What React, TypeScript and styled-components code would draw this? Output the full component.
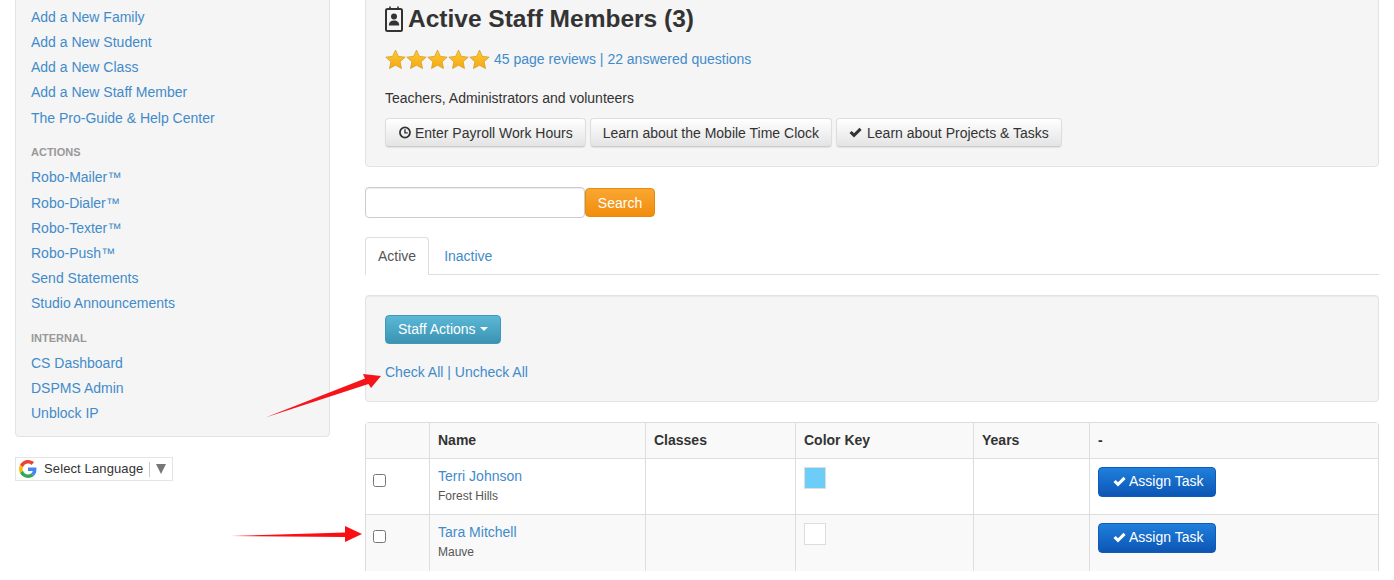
import React from "react";
import styled, { createGlobalStyle } from "styled-components";

const Global = createGlobalStyle`
  html, body { margin: 0; padding: 0; background: #fff; height: 580px; overflow: hidden; }
  body { font-family: "Liberation Sans", Arial, sans-serif; font-size: 14px; line-height: 20px; color: #333; }
  * { box-sizing: border-box; }
`;

const Page = styled.div`
  position: relative;
  display: grid;
  grid-template-columns: 315px 1014px;
  column-gap: 35px;
  padding: 0 15px;
  margin-top: -20px;
  height: 600px;
  overflow: hidden;
`;

const Side = styled.aside`
  display: flex;
  flex-direction: column;
  gap: 20px;
  align-items: flex-start;
`;

const SidePanel = styled.nav`
  width: 100%;
  height: 457px;
  padding: 23.8px 15px 0;
  background: #f5f5f5;
  border: 1px solid #e3e3e3;
  border-radius: 4px;
  box-shadow: inset 0 1px 1px rgba(0, 0, 0, 0.05);
`;

const SideList = styled.div`
  display: flex;
  flex-direction: column;
`;

const SideLink = styled.a`
  color: #428bca;
  line-height: 25.2px;
  font-size: 14px;
  height: 25.2px;
`;

const SideHead = styled.div`
  font-size: 11px;
  font-weight: bold;
  color: #999;
  line-height: 20px;
  margin: 11.6px 0 3px;
`;

const LangBox = styled.div`
  width: 158px;
  height: 24px;
  display: flex;
  align-items: center;
  padding-left: 3px;
  background: #fff;
  border: 1px solid #e4e4e4;
  font-size: 13px;
  color: #333;
`;

const LangText = styled.span`
  margin-left: 7px;
  letter-spacing: 0.12px;
`;

const LangSep = styled.span`
  width: 1px;
  height: 15px;
  margin: 0 6px;
  background: #ccc;
`;

const LangCaret = styled.span`
  width: 0;
  height: 0;
  border-left: 5px solid transparent;
  border-right: 5px solid transparent;
  border-top: 10px solid #777;
`;

const Main = styled.main`
  display: flex;
  flex-direction: column;
`;

const Hero = styled.section`
  height: 187px;
  padding: 20px 19px 0;
  background: #f5f5f5;
  border: 1px solid #e3e3e3;
  border-radius: 4px;
  box-shadow: inset 0 1px 1px rgba(0, 0, 0, 0.05);
`;

const Title = styled.h3`
  display: flex;
  align-items: center;
  gap: 5px;
  margin: 0;
  height: 36px;
  font-size: 24.5px;
  line-height: 36px;
  font-weight: bold;
  color: #333;
`;

const Rating = styled.div`
  display: flex;
  align-items: center;
  gap: 4px;
  margin-top: 8px;
  height: 28px;
  color: #428bca;
`;

const Stars = styled.span`
  display: flex;
  gap: 0;
`;

const Link = styled.a`
  color: #428bca;
`;

const Lead = styled.p`
  margin: 14px 0 0;
  line-height: 22px;
  color: #333;
`;

const ButtonRow = styled.div`
  display: flex;
  gap: 4px;
  margin-top: 9px;
`;

const GrayButton = styled.button`
  display: inline-flex;
  align-items: center;
  justify-content: center;
  gap: 5px;
  height: 29px;
  padding: 0 12px;
  font: inherit;
  color: #333;
  white-space: nowrap;
  background: linear-gradient(to bottom, #fff 0%, #e4e4e4 100%);
  border: 1px solid #ddd;
  border-bottom-color: #ccc;
  border-radius: 4px;
  box-shadow: 0 1px 1px rgba(0, 0, 0, 0.08);
`;

const SearchRow = styled.form`
  display: flex;
  align-items: center;
  margin-top: 20px;
  height: 31px;
`;

const SearchInput = styled.input`
  width: 220px;
  height: 31px;
  padding: 0 10px;
  border: 1px solid #ccc;
  border-radius: 4px;
  background: #fff;
  box-shadow: inset 0 1px 1px rgba(0, 0, 0, 0.075);
`;

const SearchButton = styled.button`
  width: 70px;
  height: 29px;
  font: inherit;
  color: #fff;
  background: linear-gradient(to bottom, #f9a733 0%, #f28c0b 100%);
  border: 1px solid #e8890c;
  border-radius: 4px;
`;

const Tabs = styled.div`
  display: flex;
  height: 38px;
  margin-top: 19px;
  border-bottom: 1px solid #ddd;
`;

const Tab = styled.a<{ $active?: boolean }>`
  height: 38px;
  padding: 8px 12px 0;
  line-height: 20px;
  border: 1px solid ${(p) => (p.$active ? "#ddd" : "transparent")};
  border-bottom: ${(p) => (p.$active ? "1px solid #fff" : "none")};
  border-radius: 4px 4px 0 0;
  background: ${(p) => (p.$active ? "#fff" : "transparent")};
  color: ${(p) => (p.$active ? "#555" : "#428bca")};
  margin-right: 2px;
`;

const Well = styled.section`
  height: 107px;
  margin-top: 20px;
  padding: 19px 19px 0;
  background: #f5f5f5;
  border: 1px solid #e3e3e3;
  border-radius: 4px;
  box-shadow: inset 0 1px 1px rgba(0, 0, 0, 0.05);
`;

const InfoButton = styled.button`
  display: flex;
  align-items: center;
  gap: 4px;
  width: 116px;
  height: 29px;
  padding: 0 0 2px 12px;
  font: inherit;
  color: #fff;
  background: linear-gradient(to bottom, #5bb8d6 0%, #3b93b2 100%);
  border: 1px solid #3f98b8;
  border-radius: 4px;
`;

const Caret = styled.span`
  width: 0;
  height: 0;
  border-left: 4px solid transparent;
  border-right: 4px solid transparent;
  border-top: 4px solid #fff;
`;

const CheckLinks = styled.div`
  margin-top: 18px;
  color: #428bca;
`;

const Table = styled.table`
  width: 1014px;
  margin-top: 20px;
  border-collapse: separate;
  border-spacing: 0;
  table-layout: fixed;
  border: 1px solid #ddd;
  border-bottom: none;
  border-radius: 4px 4px 0 0;
`;

const Th = styled.th`
  height: 36px;
  padding: 0 8px 2px;
  text-align: left;
  font-weight: bold;
  background: #f9f9f9;
  border-bottom: 1px solid #ddd;
  & + & { border-left: 1px solid #ddd; }
`;

const Row = styled.tr<{ $odd?: boolean }>`
  background: ${(p) => (p.$odd ? "#f9f9f9" : "#fff")};
`;

const Td = styled.td<{ $last?: boolean }>`
  height: 56px;
  padding: 7px 8px 8px;
  vertical-align: top;
  border-bottom: ${(p) => (p.$last ? "none" : "1px solid #ddd")};
  & + & { border-left: 1px solid #ddd; }
`;

const CheckCell = styled(Td)`
  padding: 13px 0 0 7px;
`;

const Check = styled.input`
  display: block;
  width: 13px;
  height: 13px;
  margin: 1.500px 0 0;
`;

const Name = styled.a`
  display: block;
  color: #428bca;
  line-height: 20px;
`;

const Sub = styled.div`
  font-size: 12px;
  line-height: 20px;
  color: #555;
  margin-top: 0;
`;

const Swatch = styled.div<{ $color: string }>`
  width: 22px;
  height: 22px;
  margin-top: 1px;
  background: ${(p) => p.$color};
  border: 1px solid #ddd;
`;

const TaskButton = styled.button`
  display: inline-flex;
  align-items: center;
  gap: 3px;
  width: 118px;
  height: 30px;
  margin-top: 1px;
  padding: 0 0 2px 14px;
  font: inherit;
  color: #fff;
  background: linear-gradient(to bottom, #1f7fdb 0%, #0d55b5 100%);
  border: 1px solid #0f5bb9;
  border-radius: 4px;
`;

const Overlay = styled.svg`
  position: absolute;
  left: 0;
  top: 20px;
  pointer-events: none;
`;

const ClockSvg = styled.svg`
  margin-right: -1px;
`;

const GlyphCheck = ({ color, size = 13 }: { color: string; size?: number }) => (
  <svg width={size} height={size} viewBox="0 0 14 14" aria-hidden>
    <path d="M0.5 7.6 L2.9 5.3 L5.4 7.8 L11.3 2 L13.6 4.3 L5.4 12.4 Z" fill={color} />
  </svg>
);

const ClockIcon = () => (
  <ClockSvg width="13" height="13" viewBox="0 0 14 14" aria-hidden>
    <circle cx="7.500" cy="7" r="5.400" fill="none" stroke="#333" strokeWidth="1.9" />
    <path d="M7.500 3.600V7.400H10.500" fill="none" stroke="#333" strokeWidth="1.5" />
  </ClockSvg>
);

const BadgeIcon = () => (
  <svg width="18" height="26" viewBox="0 0 18 26" aria-hidden>
    <rect x="1" y="3" width="16" height="22" rx="1.5" fill="none" stroke="#333" strokeWidth="2" />
    <path d="M5 0.5V4M13 0.5V4" stroke="#333" strokeWidth="1.6" />
    <circle cx="9" cy="10.6" r="3" fill="#333" />
    <path d="M3.8 19.5c0-3.4 2-5 5.2-5s5.2 1.6 5.2 5z" fill="#333" />
  </svg>
);

const Star = () => (
  <svg width="21" height="21" viewBox="0 0 24 24" aria-hidden>
    <defs>
      <linearGradient id="starfill" x1="0" y1="0" x2="0" y2="1">
        <stop offset="0" stopColor="#fdc93a" />
        <stop offset="1" stopColor="#f6a80f" />
      </linearGradient>
    </defs>
    <path
      d="M12 1.2l3.3 7.2 7.8.9-5.8 5.3 1.6 7.8L12 18.5l-6.9 3.9 1.6-7.8L.9 9.3l7.8-.9z"
      fill="url(#starfill)"
      stroke="#d39a1e"
      strokeWidth="0.8"
    />
  </svg>
);

const GoogleG = () => (
  <svg width="18" height="18" viewBox="0 0 48 48" aria-hidden>
    <path fill="#EA4335" d="M24 9.5c3.5 0 6.7 1.2 9.2 3.6l6.9-6.9C35.9 2.4 30.5 0 24 0 14.6 0 6.5 5.4 2.6 13.2l8 6.2C12.5 13.7 17.800 9.500 24 9.500z" />
    <path fill="#4285F4" d="M46.500 24.500c0-1.600-.1-3.100-.4-4.500H24v9h12.700c-.6 2.900-2.200 5.400-4.700 7.100l7.700 6c4.500-4.200 6.800-10.300 6.800-17.600z" />
    <path fill="#FBBC05" d="M10.500 28.600c-.5-1.400-.8-3-.8-4.600s.3-3.200.8-4.600l-8-6.200C.9 16.500 0 20.100 0 24s.9 7.500 2.600 10.800l7.900-6.200z" />
    <path fill="#34A853" d="M24 48c6.500 0 11.900-2.100 15.900-5.800l-7.700-6c-2.200 1.500-4.900 2.300-8.200 2.300-6.200 0-11.500-4.200-13.400-9.900l-8 6.200C6.500 42.600 14.600 48 24 48z" />
  </svg>
);

const sections = [
  { links: ["Add a New Family", "Add a New Student", "Add a New Class", "Add a New Staff Member", "The Pro-Guide & Help Center"] },
  { head: "ACTIONS", links: ["Robo-Mailer™", "Robo-Dialer™", "Robo-Texter™", "Robo-Push™", "Send Statements", "Studio Announcements"] },
  { head: "INTERNAL", links: ["CS Dashboard", "DSPMS Admin", "Unblock IP"] },
];

const staff = [
  { name: "Terri Johnson", place: "Forest Hills", color: "#6ccdf8" },
  { name: "Tara Mitchell", place: "Mauve", color: "#ffffff" },
];

export default function App() {
  return (
    <Page>
      <Global />
      <Side>
        <SidePanel>
          {sections.map((s, i) => (
            <SideList key={i}>
              {s.head && <SideHead>{s.head}</SideHead>}
              {s.links.map((l) => (
                <SideLink key={l}>{l}</SideLink>
              ))}
            </SideList>
          ))}
        </SidePanel>
        <LangBox>
          <GoogleG />
          <LangText>Select Language</LangText>
          <LangSep />
          <LangCaret />
        </LangBox>
      </Side>
      <Main>
        <Hero>
          <Title>
            <BadgeIcon />
            Active Staff Members (3)
          </Title>
          <Rating>
            <Stars>
              {[0, 1, 2, 3, 4].map((i) => (
                <Star key={i} />
              ))}
            </Stars>
            <span>
              <Link>45 page reviews</Link> | <Link>22 answered questions</Link>
            </span>
          </Rating>
          <Lead>Teachers, Administrators and volunteers</Lead>
          <ButtonRow>
            <GrayButton>
              <ClockIcon />
              Enter Payroll Work Hours
            </GrayButton>
            <GrayButton>Learn about the Mobile Time Clock</GrayButton>
            <GrayButton>
              <GlyphCheck color="#333" />
              Learn about Projects &amp; Tasks
            </GrayButton>
          </ButtonRow>
        </Hero>
        <SearchRow>
          <SearchInput />
          <SearchButton type="button">Search</SearchButton>
        </SearchRow>
        <Tabs>
          <Tab $active>Active</Tab>
          <Tab>Inactive</Tab>
        </Tabs>
        <Well>
          <InfoButton>
            Staff Actions
            <Caret />
          </InfoButton>
          <CheckLinks>
            <Link>Check All</Link> | <Link>Uncheck All</Link>
          </CheckLinks>
        </Well>
        <Table>
          <colgroup>
            <col style={{ width: 63 }} />
            <col style={{ width: 216 }} />
            <col style={{ width: 150 }} />
            <col style={{ width: 178 }} />
            <col style={{ width: 116 }} />
            <col />
          </colgroup>
          <thead>
            <tr>
              <Th />
              <Th>Name</Th>
              <Th>Classes</Th>
              <Th>Color Key</Th>
              <Th>Years</Th>
              <Th>-</Th>
            </tr>
          </thead>
          <tbody>
            {staff.map((s, i) => {
              const last = i === staff.length - 1;
              return (
                <Row key={s.name} $odd={i % 2 === 1}>
                  <CheckCell $last={last}>
                    <Check type="checkbox" />
                  </CheckCell>
                  <Td $last={last}>
                    <Name>{s.name}</Name>
                    <Sub>{s.place}</Sub>
                  </Td>
                  <Td $last={last} />
                  <Td $last={last}>
                    <Swatch $color={s.color} />
                  </Td>
                  <Td $last={last} />
                  <Td $last={last}>
                    <TaskButton>
                      <GlyphCheck color="#fff" />
                      Assign Task
                    </TaskButton>
                  </Td>
                </Row>
              );
            })}
          </tbody>
        </Table>
      </Main>
      <Overlay width="1394" height="580" viewBox="0 0 1394 580" aria-hidden>
        <path d="M265.500 417.500 L365 378.500 L363 374 L381 376 L371 388 L368.500 384 Z" fill="#f6141b" />
        <path d="M231 536 L345 532.500 L345 526 L362 534 L345 542 L345 537 Z" fill="#fb0d14" />
      </Overlay>
    </Page>
  );
}
